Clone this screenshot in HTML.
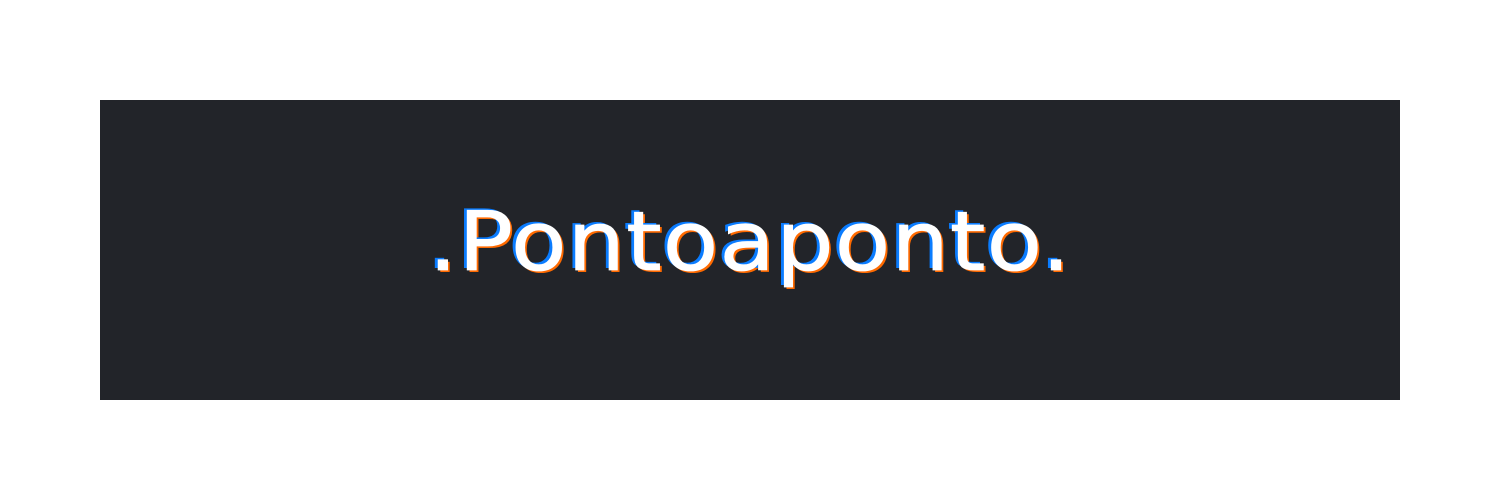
<!DOCTYPE html>
<html><head><style>
html,body{margin:0;padding:0;background:#fff;width:1500px;height:500px;overflow:hidden}
.box{position:absolute;left:100px;top:100px;width:1300px;height:300px;background:#222429}
.t{position:absolute;left:0;width:1300px;text-align:center;top:93px;font-family:"DejaVu Sans",sans-serif;font-size:82px;line-height:100px;letter-spacing:1px;color:#fff;-webkit-text-stroke:0.8px #fff;text-shadow:-3px -2px 0 #0a7cff,2px 2px 0 #ff6a00;transform:scaleX(1.106);transform-origin:650px 50px}
</style></head><body>
<div class="box"><div class="t">.Pontoaponto.</div></div>
</body></html>
